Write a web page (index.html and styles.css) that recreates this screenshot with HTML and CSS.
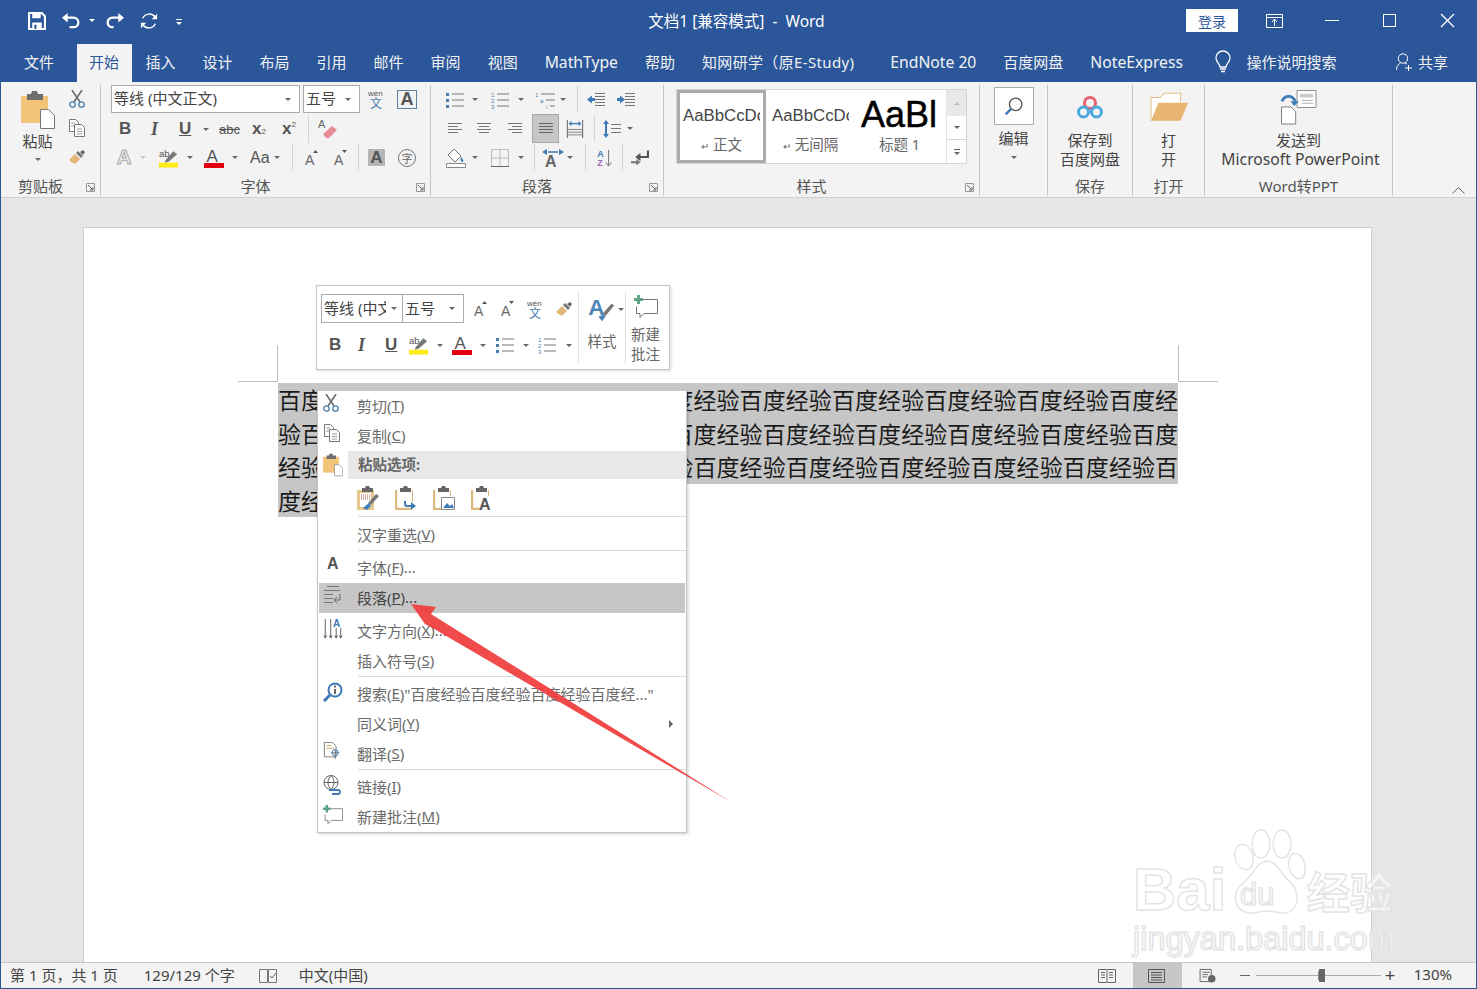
FILE: index.html
```html
<!DOCTYPE html>
<html lang="zh-CN">
  <head>
    <meta charset="UTF-8">
    <title>文档1 [兼容模式] - Word</title>
    <link rel="stylesheet" href="styles.css">
  </head>
  <body>
    <svg class="defs" aria-hidden="true">
      <symbol id="cut" viewBox="0 0 16 18"><path d="M3 0l8 12M13 0L5 12" stroke="#6b6b6b" stroke-width="1.6" fill="none"/><circle cx="3.5" cy="14.5" r="2.7" stroke="#4a7eb0" stroke-width="1.3" fill="none"/><circle cx="12.5" cy="14.5" r="2.7" stroke="#4a7eb0" stroke-width="1.3" fill="none"/></symbol>
      <symbol id="copy" viewBox="0 0 18 18"><path d="M1.500.500h6l3 3v9h-9z" fill="#fff" stroke="#777"/><path d="M6.500 5.500h7l3 3v9h-10z" fill="#fff" stroke="#777"/><path d="M3 4h4M3 7h3M9 10h5M9 12.500h5M9 15h5" stroke="#999"/></symbol>
      <symbol id="brush" viewBox="0 0 18 16"><path d="M1 11l6-6 5 5-5 5c-2-1-4-2-6-4z" fill="#e3b778"/><path d="M8 4l2-2 5 5-2 2z" fill="#777"/><path d="M12 3l3-2 2 2-2 3z" fill="#666"/></symbol>
      <symbol id="paste" viewBox="0 0 34 38"><path d="M0 5h27v27H0z" fill="#f1c47a"/><path d="M6 3h4l1-3h5l1 3h5v6H6z" fill="#6e6e6e"/><path d="M19.500 18.500h8l6 6v13h-14z" fill="#fff" stroke="#777"/></symbol>
      <symbol id="eraser" viewBox="0 0 20 20"><text x="0" y="9" font-family="Liberation Sans" font-size="11" fill="#666">A</text><path d="M5 15l9-8 5 4-8 8H8z" fill="#e98b95"/></symbol>
      <symbol id="highlight" viewBox="0 0 21 20"><text x="0" y="9" font-family="Liberation Sans" font-size="10" fill="#555">ab</text><path d="M7 12l8-9 4 3-9 8-4 1z" fill="#777"/><path d="M0 15h20v5H0z" fill="#ffec16"/></symbol>
      <symbol id="fontcolor" viewBox="0 0 20 20"><text x="2.500" y="14" font-family="Liberation Sans" font-size="17" fill="#555">A</text><path d="M0 15h20v5H0z" fill="#e3000f"/></symbol>
      <symbol id="growa" viewBox="0 0 14 16"><text x="0" y="15" font-family="Liberation Sans" font-size="14" fill="#666">A</text><path d="M8 3l2.500-3L13 3z" fill="#555"/></symbol>
      <symbol id="shrinka" viewBox="0 0 14 16"><text x="0" y="15" font-family="Liberation Sans" font-size="14" fill="#666">A</text><path d="M8 0h5l-2.500 3z" fill="#555"/></symbol>
      <symbol id="wen" viewBox="0 0 17 20"><text x="0" y="7" font-family="Liberation Sans" font-size="8" fill="#555">wén</text><text x="2" y="19" font-family="Noto Sans CJK SC" font-size="12" fill="#4a7eb0">文</text></symbol>
      <symbol id="bullets" viewBox="0 0 18 18"><path d="M6 3h12M6 9h12M6 15h12" stroke="#777"/><path d="M0 2h3v3H0zM0 8h3v3H0zM0 14h3v3H0z" fill="#4a7eb0"/></symbol>
      <symbol id="numbers" viewBox="0 0 18 18"><path d="M6 3h12M6 9h12M6 15h12" stroke="#777"/><text y="5.500" font-family="Liberation Sans" font-size="6" fill="#4a7eb0">1</text><text y="11.500" font-family="Liberation Sans" font-size="6" fill="#4a7eb0">2</text><text y="17.500" font-family="Liberation Sans" font-size="6" fill="#4a7eb0">3</text></symbol>
      <symbol id="multilevel" viewBox="0 0 22 18"><path d="M6 3h14M11 9h9M15 15h5" stroke="#777"/><text y="5.500" font-family="Liberation Sans" font-size="6" fill="#4a7eb0">1</text><text x="5" y="11.500" font-family="Liberation Sans" font-size="6" fill="#4a7eb0">a</text><text x="11" y="17.500" font-family="Liberation Sans" font-size="6" fill="#4a7eb0">i</text></symbol>
      <symbol id="outdent" viewBox="0 0 18 16"><path d="M8 1.500h10M8 4.500h10M8 7.500h10M8 10.500h10M8 13.500h10" stroke="#777"/><path d="M0 7.500l5-4v2.500h3v3H5v2.500z" fill="#3e7ab5"/></symbol>
      <symbol id="indent" viewBox="0 0 18 16"><path d="M8 1.500h10M8 4.500h10M8 7.500h10M8 10.500h10M8 13.500h10" stroke="#777"/><path d="M8 7.500l-5-4v2.500H0v3h3v2.500z" fill="#3e7ab5"/></symbol>
      <symbol id="alignleft" viewBox="0 0 14 12"><path d="M0 .5h14M0 3.500h10M0 6.500h14M0 9.500h10" stroke="#777"/></symbol>
      <symbol id="aligncenter" viewBox="0 0 14 12"><path d="M0 .5h14M2 3.500h10M0 6.500h14M2 9.500h10" stroke="#777"/></symbol>
      <symbol id="alignright" viewBox="0 0 14 12"><path d="M0 .5h14M4 3.500h10M0 6.500h14M4 9.500h10" stroke="#777"/></symbol>
      <symbol id="justify" viewBox="0 0 14 12"><path d="M0 .5h14M0 3.500h14M0 6.500h14M0 9.500h14" stroke="#666"/></symbol>
      <symbol id="distribute" viewBox="0 0 18 20"><path d="M.5 0v20M17.500 0v20" stroke="#555"/><path d="M3 4h12" stroke="#3e7ab5" stroke-width="1.500"/><path d="M2 4l3-3v6zM16 4l-3-3v6z" fill="#3e7ab5"/><path d="M1 10.500h16M1 13.500h16M1 16.500h16" stroke="#777"/></symbol>
      <symbol id="linespacing" viewBox="0 0 18 18"><path d="M3 0l3 4H4v10h2l-3 4-3-4h2V4H0z" fill="#3e7ab5"/><path d="M8 4.500h10M8 8.500h10M8 12.500h10" stroke="#777"/></symbol>
      <symbol id="shade" viewBox="0 0 20 20"><path d="M8 1l7 7-6 6-7-7z" fill="#fff" stroke="#777"/><path d="M15 9c2 2 3 4 2 5-2 0-3-2-2-5z" fill="#3e7ab5"/><path d="M.500 15.500h19v4H.500z" fill="#fff" stroke="#888"/></symbol>
      <symbol id="borders" viewBox="0 0 18 18"><path d="M.5.500h17v17H.500zM9 .5v17M.5 9h17" fill="none" stroke="#888" stroke-dasharray="1 1"/><path d="M0 17.500h18" stroke="#666"/></symbol>
      <symbol id="textdir" viewBox="0 0 22 18"><path d="M6 3h10" stroke="#3e7ab5" stroke-width="1.500"/><path d="M0 3l5-3v6zM22 3l-5-3v6z" fill="#3e7ab5"/><text x="3" y="18" font-family="Liberation Sans" font-weight="700" font-size="16" fill="#666">A</text></symbol>
      <symbol id="sort" viewBox="0 0 17 20"><text y="9" font-family="Liberation Sans" font-weight="700" font-size="10" fill="#3e7ab5">A</text><text y="19" font-family="Liberation Sans" font-weight="700" font-size="10" fill="#a06ab0">Z</text><path d="M12.500 1v17M9.500 15l3 4 3-4" stroke="#666" fill="none"/></symbol>
      <symbol id="marks" viewBox="0 0 17 14"><path d="M16 0v6H7" stroke="#555" stroke-width="2" fill="none"/><path d="M4 6l5-4v8z" fill="#555"/><path d="M0 11h6" stroke="#777" stroke-width="2"/><path d="M5 8l4 3-4 3z" fill="#777"/></symbol>
      <symbol id="launcher" viewBox="0 0 9 9"><path d="M.5 8.500v-8h8v8z" fill="none" stroke="#999"/><path d="M2 2l5 5M7 4v3H4" stroke="#666" fill="none"/></symbol>
      <symbol id="search" viewBox="0 0 24 24"><circle cx="14" cy="10" r="7.500" fill="none" stroke="#555" stroke-width="1.600"/><path d="M8.500 15.500L2 22" stroke="#3e7ab5" stroke-width="3"/></symbol>
      <symbol id="smart" viewBox="0 0 20 20"><circle cx="12" cy="8" r="6.500" fill="none" stroke="#3e7ab5" stroke-width="2"/><path d="M12 7v5M12 3.500v2" stroke="#555" stroke-width="1.800"/><path d="M7 13l-6 6" stroke="#3e7ab5" stroke-width="3"/></symbol>
      <symbol id="stylebrush" viewBox="0 0 32 30"><text x="0" y="22" font-family="Liberation Sans" font-weight="700" font-size="26" fill="#4f84b8">A</text><path d="M17 20l10-11 3 2-10 12z" fill="#777"/><path d="M12 24l6-3 2 3-4 5z" fill="#4f84b8"/></symbol>
      <symbol id="comment" viewBox="0 0 24 24"><path d="M7.500 4.500h16v14H10l-4 4v-4H2.500v-7" fill="none" stroke="#777"/><path d="M3 0h3v3h3v3H6v3H3V6H0V3h3z" fill="#5fa386"/></symbol>
      <symbol id="para" viewBox="0 0 18 18"><path d="M3 .5h12M0 4.500h16M0 8.500h9M0 12.500h9M0 16.500h9" stroke="#777"/><path d="M16 8v6h-5" stroke="#666" fill="none"/><path d="M13 11l-3 3 3 3" stroke="#666" fill="none"/></symbol>
      <symbol id="vertical" viewBox="0 0 20 22"><path d="M1.500 0v21M7.500 0v21M13.500 10v11M18.500 10v11" stroke="#555"/><path d="M0 18l1.500 3 1.500-3M6 18l1.500 3 1.500-3M12 18l1.500 3 1.500-3M17 18l1.500 3 1.500-3" fill="none" stroke="#555"/><text x="10" y="9" font-family="Liberation Sans" font-weight="700" font-size="11" fill="#3e7ab5">A</text></symbol>
      <symbol id="translate" viewBox="0 0 18 20"><path d="M.5.500h9l4 4v12H.5z" fill="#fff" stroke="#777"/><path d="M3 4h5M3 7h8" stroke="#c69a52"/><path d="M8 12h9M12.500 8v11" stroke="#666"/><circle cx="12.500" cy="12" r="3.500" fill="none" stroke="#3e7ab5"/></symbol>
      <symbol id="link" viewBox="0 0 20 20"><circle cx="8" cy="7.500" r="7" fill="none" stroke="#666"/><path d="M1 7.500h14M8 .5c-4 4-4 10 0 14M8 .5c4 4 4 10 0 14" fill="none" stroke="#666"/><path d="M6 15h9a2 2 0 0 1 0 4H9" fill="none" stroke="#3e7ab5" stroke-width="1.800"/></symbol>
      <symbol id="clip-keep" viewBox="0 0 22 24"><path d="M0 4h17v20H0z" fill="#e8c68f"/><path d="M3 7h11v14H3z" fill="#fff"/><path d="M4 9h9M4 11h9M4 13h9" stroke="#c0604f" stroke-dasharray="1 1"/><path d="M5 2h3l1-2h3l1 2h3v4H5z" fill="#666"/><path d="M11 17l8-9 3 2-8 9z" fill="#777"/><path d="M6 22l6-5 2 3-4 4z" fill="#3e7ab5"/></symbol>
      <symbol id="clip-merge" viewBox="0 0 22 24"><path d="M1 4v19h16" fill="none" stroke="#dcb97f" stroke-width="2.400"/><path d="M17.500 4v12" stroke="#dcb97f"/><path d="M5 2h3l1-2h3l1 2h3v4H5z" fill="#666"/><path d="M10 15v3a2 2 0 0 0 2 2h5" fill="none" stroke="#3e7ab5" stroke-width="2"/><path d="M16 16l5 4-5 4z" fill="#3e7ab5"/></symbol>
      <symbol id="clip-pic" viewBox="0 0 22 24"><path d="M1 4v19h8" fill="none" stroke="#dcb97f" stroke-width="2.400"/><path d="M17.500 4v6" stroke="#dcb97f"/><path d="M5 2h3l1-2h3l1 2h3v4H5z" fill="#666"/><path d="M8.500 11.500h13v12h-13z" fill="#fff" stroke="#888"/><path d="M10 22l4-5 3 3 2-2 2 4z" fill="#3e7ab5"/></symbol>
      <symbol id="clip-text" viewBox="0 0 22 24"><path d="M1 4v19h8" fill="none" stroke="#dcb97f" stroke-width="2.400"/><path d="M17.500 4v6" stroke="#dcb97f"/><path d="M5 2h3l1-2h3l1 2h3v4H5z" fill="#666"/><text x="8" y="24" font-family="Liberation Sans" font-weight="700" font-size="16" fill="#555">A</text></symbol>
    </svg>

    <div class="app">
      <header class="titlebar">
        <div class="qat">
          <svg class="qat-icon" viewBox="0 0 17 17"><path d="M1 1h12l3 3v12H1z" fill="none" stroke="#fff" stroke-width="2"/><path d="M4 1h8v5H4zM4 10h9v6H4z" fill="#fff"/><path d="M6 12h2v4H6z" fill="#2b579a"/></svg>
          <svg class="qat-icon" viewBox="0 0 19 17"><path d="M2 5h10c7 0 7 10 0 10H8" fill="none" stroke="#fff" stroke-width="2.400"/><path d="M0 5l6-5v10z" fill="#fff"/></svg>
          <i class="caret caret-white"></i>
          <svg class="qat-icon" viewBox="0 0 19 17"><path d="M17 5H7c-7 0-7 10 0 10h1" fill="none" stroke="#fff" stroke-width="2.400"/><path d="M19 5l-6-5v10z" fill="#fff"/></svg>
          <svg class="qat-icon" viewBox="0 0 20 20"><path d="M3 7a8 8 0 0 1 14-1M17 13a8 8 0 0 1-14 1" fill="none" stroke="#fff" stroke-width="1.600"/><path d="M19 2v6h-6zM1 18v-6h6z" fill="#fff"/></svg>
          <span class="qat-more"><i class="more-line"></i><i class="caret caret-white"></i></span>
        </div>
        <div class="doc-title">文档1 [兼容模式]&nbsp; -&nbsp; Word</div>
        <div class="win-controls">
          <button class="login">登录</button>
          <span class="win-btn"><svg class="win-icon-wide" viewBox="0 0 17 14"><path d="M.5.500h16v13H.5zM.5 3.500h16" fill="none" stroke="#fff"/><path d="M8.500 5v7M6 8l2.500-3L11 8" fill="none" stroke="#fff"/></svg></span>
          <span class="win-btn"><i class="win-min"></i></span>
          <span class="win-btn"><i class="win-max"></i></span>
          <span class="win-btn"><svg class="win-icon" viewBox="0 0 13 13"><path d="M0 0l13 13M13 0L0 13" stroke="#fff" stroke-width="1.300"/></svg></span>
        </div>
      </header>

      <nav class="tabs">
        <span class="tab">文件</span>
        <span class="tab tab-active">开始</span>
        <span class="tab">插入</span>
        <span class="tab">设计</span>
        <span class="tab">布局</span>
        <span class="tab">引用</span>
        <span class="tab">邮件</span>
        <span class="tab">审阅</span>
        <span class="tab">视图</span>
        <span class="tab tab-latin">MathType</span>
        <span class="tab">帮助</span>
        <span class="tab tab-cnki">知网研学（原E-Study)</span>
        <span class="tab tab-latin tab-endnote">EndNote 20</span>
        <span class="tab">百度网盘</span>
        <span class="tab tab-latin">NoteExpress</span>
        <svg class="bulb" viewBox="0 0 16 22"><path d="M5 16c0-3-4-5-4-9a7 7 0 0 1 14 0c0 4-4 6-4 9z" fill="none" stroke="#fff" stroke-width="1.300"/><path d="M5 18h6M6 20.500h4" stroke="#fff" stroke-width="1.300"/></svg>
        <span class="tell-me">操作说明搜索</span>
        <svg class="share-icon" viewBox="0 0 16 18"><circle cx="7" cy="5.500" r="4.700" fill="none" stroke="#fff"/><path d="M.5 17c0-4 2-6 4-7M9 10l2 1M9 15h7M12.500 12v6" fill="none" stroke="#fff"/></svg>
        <span class="share">共享</span>
      </nav>

      <section class="ribbon">
        <div class="group g-clip">
          <div class="group-body clip-body">
            <div class="paste-col">
              <svg class="paste-big"><use href="#paste"/></svg>
              <span class="big-label">粘贴</span>
              <i class="caret"></i>
            </div>
            <div class="clip-tools">
              <svg class="ic16"><use href="#cut"/></svg>
              <svg class="ic18"><use href="#copy"/></svg>
              <svg class="ic18"><use href="#brush"/></svg>
            </div>
          </div>
          <div class="group-label has-launcher">剪贴板<svg class="launcher"><use href="#launcher"/></svg></div>
        </div>

        <div class="group g-font">
          <div class="group-body">
            <div class="font-row1">
              <div class="combo combo-font"><span>等线 (中文正文)</span><i class="caret"></i></div>
              <div class="combo combo-size"><span>五号</span><i class="caret"></i></div>
              <svg class="ic-wen"><use href="#wen"/></svg>
              <span class="boxed-a">A</span>
            </div>
            <div class="font-row2 tool-row">
              <b class="t-b">B</b><i class="t-i">I</i><u class="t-u">U</u><i class="caret"></i>
              <s class="t-abc">abc</s>
              <span class="t-sub">x<small>2</small></span>
              <span class="t-sup">x<sup>2</sup></span>
              <i class="vsep"></i>
              <svg class="ic20"><use href="#eraser"/></svg>
            </div>
            <div class="font-row3 tool-row">
              <span class="a-outline">A</span><i class="caret caret-light"></i>
              <svg class="ic20"><use href="#highlight"/></svg><i class="caret"></i>
              <svg class="ic20"><use href="#fontcolor"/></svg><i class="caret"></i>
              <span class="t-aa">Aa</span><i class="caret"></i>
              <i class="vsep"></i>
              <svg class="ic14"><use href="#growa"/></svg>
              <svg class="ic14"><use href="#shrinka"/></svg>
              <i class="vsep"></i>
              <span class="a-shade">A</span>
              <span class="t-zi">字</span>
            </div>
          </div>
          <div class="group-label has-launcher">字体<svg class="launcher"><use href="#launcher"/></svg></div>
        </div>

        <div class="group g-para">
          <div class="group-body">
            <div class="para-row1 tool-row">
              <svg class="ic18"><use href="#bullets"/></svg><i class="caret"></i>
              <svg class="ic18"><use href="#numbers"/></svg><i class="caret"></i>
              <svg class="ic22"><use href="#multilevel"/></svg><i class="caret"></i>
              <i class="vsep"></i>
              <svg class="ic18"><use href="#outdent"/></svg>
              <svg class="ic18"><use href="#indent"/></svg>
            </div>
            <div class="para-row2 tool-row">
              <svg class="ic14"><use href="#alignleft"/></svg>
              <svg class="ic14"><use href="#aligncenter"/></svg>
              <svg class="ic14"><use href="#alignright"/></svg>
              <span class="justify-on"><svg class="ic14"><use href="#justify"/></svg></span>
              <svg class="ic18"><use href="#distribute"/></svg>
              <i class="vsep"></i>
              <svg class="ic18"><use href="#linespacing"/></svg><i class="caret"></i>
            </div>
            <div class="para-row3 tool-row">
              <svg class="ic20"><use href="#shade"/></svg><i class="caret"></i>
              <svg class="ic18"><use href="#borders"/></svg><i class="caret"></i>
              <i class="vsep"></i>
              <svg class="ic22"><use href="#textdir"/></svg><i class="caret"></i>
              <i class="vsep"></i>
              <svg class="ic18"><use href="#sort"/></svg>
              <i class="vsep"></i>
              <svg class="ic18"><use href="#marks"/></svg>
            </div>
          </div>
          <div class="group-label has-launcher">段落<svg class="launcher"><use href="#launcher"/></svg></div>
        </div>

        <div class="group g-style">
          <div class="group-body">
            <div class="gallery">
              <div class="style-item style-on"><span class="style-sample">AaBbCcDc</span><span class="style-name"><small>↵</small> 正文</span></div>
              <div class="style-item"><span class="style-sample">AaBbCcDc</span><span class="style-name"><small>↵</small> 无间隔</span></div>
              <div class="style-item"><span class="style-sample style-big">AaBl</span><span class="style-name">标题 1</span></div>
              <div class="gallery-scroll">
                <span class="scroll-up"><i class="caret-up"></i></span>
                <span class="scroll-down"><i class="caret"></i></span>
                <span class="scroll-more"><i class="more-line more-dark"></i><i class="caret"></i></span>
              </div>
            </div>
          </div>
          <div class="group-label has-launcher">样式<svg class="launcher"><use href="#launcher"/></svg></div>
        </div>

        <div class="group g-edit">
          <div class="group-body big-col">
            <span class="edit-box"><svg class="ic22"><use href="#search"/></svg></span>
            <span class="big-label edit-label">编辑</span>
            <i class="caret"></i>
          </div>
        </div>

        <div class="group g-save">
          <div class="group-body big-col">
            <svg class="big-icon icon-save" viewBox="0 0 28 26"><circle cx="14" cy="8" r="5.500" fill="none" stroke="#e8606a" stroke-width="3"/><circle cx="7.500" cy="17" r="5" fill="none" stroke="#4aa8de" stroke-width="3"/><circle cx="20.500" cy="17" r="5" fill="none" stroke="#4aa8de" stroke-width="3"/></svg>
            <span class="big-text">保存到<br>百度网盘</span>
          </div>
          <div class="group-label">保存</div>
        </div>

        <div class="group g-open">
          <div class="group-body big-col">
            <svg class="big-icon" viewBox="0 0 36 28"><path d="M1 27V5h9l3-4h16v8" fill="#fff" stroke="#e3bf87"/><path d="M1 27l7-17h28l-7 17z" fill="#e8b671"/></svg>
            <span class="big-text">打<br>开</span>
          </div>
          <div class="group-label">打开</div>
        </div>

        <div class="group g-ppt">
          <div class="group-body big-col">
            <svg class="big-icon" viewBox="0 0 38 36"><path d="M17 .5h20v18H17z" fill="#fff" stroke="#888"/><path d="M20 4h14v4H20z" fill="#ccc"/><path d="M22 11h12M22 14h12" stroke="#aaa"/><path d="M.5 18h10l5 5v13H.5z" fill="#fff" stroke="#777"/><path d="M1 12c3-7 11-7 14 0" fill="none" stroke="#3e7ab5" stroke-width="3"/><path d="M10 12h9l-5 5z" fill="#3e7ab5"/></svg>
            <span class="big-text">发送到<br><span class="latin-wide">Microsoft PowerPoint</span></span>
          </div>
          <div class="group-label">Word转PPT</div>
        </div>

        <svg class="collapse" viewBox="0 0 13 7"><path d="M.5 6.500l6-6 6 6" fill="none" stroke="#666"/></svg>
      </section>

      <main class="doc-area">
        <div class="page">
          <i class="crop crop-left"></i>
          <i class="crop crop-right"></i>
          <div class="page-text">
            <div class="sel-line">百度经验百度经验百度经验百度经验百度经验百度经验百度经验百度经验百度经验百度经</div>
            <div class="sel-line">验百度经验百度经验百度经验百度经验百度经验百度经验百度经验百度经验百度经验百度</div>
            <div class="sel-line">经验百度经验百度经验百度经验百度经验百度经验百度经验百度经验百度经验百度经验百</div>
            <div class="sel-line sel-last">度经验百度经验百度</div>
          </div>
        </div>
      </main>

      <footer class="statusbar">
        <span class="st-page">第 1 页，共 1 页</span>
        <span class="st-count">129/129 个字</span>
        <svg class="st-proof" viewBox="0 0 18 16"><path d="M8.500 1.500H.5v13h8zM9.500 1.500h8v13h-8z" fill="none" stroke="#777"/><path d="M11 8l2 2 4-5" fill="none" stroke="#666"/></svg>
        <span class="st-lang">中文(中国)</span>
        <div class="st-right">
          <svg class="st-view" viewBox="0 0 18 14"><path d="M.5.500h8l.5 1 .5-1h8v13h-8l-.5-1-.5 1h-8zM9 2v10M3 3.500h4M3 6h4M3 8.500h4M11 3.500h4M11 6h4M11 8.500h4" fill="none" stroke="#666"/></svg>
          <span class="st-view-on"><svg class="st-view" viewBox="0 0 18 14"><path d="M.5.500h16v13H.5zM3 3.500h11M3 6h11M3 8.500h11M3 11h11" fill="none" stroke="#555"/></svg></span>
          <svg class="st-view st-web" viewBox="0 0 18 15"><path d="M.5.500h12v13H.5zM3 3.500h8M3 6h6M3 8.500h5" fill="none" stroke="#666"/><circle cx="13" cy="10.500" r="4" fill="#666"/></svg>
          <i class="zoom-minus"></i>
          <div class="slider"><i class="slider-mark"></i><i class="slider-thumb"></i></div>
          <span class="zoom-plus">+</span>
          <span class="zoom-pct">130%</span>
        </div>
      </footer>

      <div class="mini">
        <div class="mini-main">
          <div class="mini-row1 tool-row">
            <div class="combo mini-font"><span>等线 (中文</span><i class="caret"></i></div>
            <div class="combo mini-size"><span>五号</span><i class="caret"></i></div>
            <svg class="ic14"><use href="#growa"/></svg>
            <svg class="ic14"><use href="#shrinka"/></svg>
            <svg class="ic-wen"><use href="#wen"/></svg>
            <svg class="ic18"><use href="#brush"/></svg>
          </div>
          <div class="mini-row2 tool-row">
            <b class="t-b">B</b><i class="t-i">I</i><u class="t-u">U</u>
            <svg class="ic20"><use href="#highlight"/></svg><i class="caret"></i>
            <svg class="ic20"><use href="#fontcolor"/></svg><i class="caret"></i>
            <svg class="ic18"><use href="#bullets"/></svg><i class="caret"></i>
            <svg class="ic18"><use href="#numbers"/></svg><i class="caret"></i>
          </div>
        </div>
        <div class="mini-col mini-style">
          <div class="mini-style-icon"><svg class="ic26"><use href="#stylebrush"/></svg><i class="caret"></i></div>
          <span>样式</span>
        </div>
        <div class="mini-col mini-comment">
          <svg class="ic24"><use href="#comment"/></svg>
          <span>新建<br>批注</span>
        </div>
      </div>

      <div class="menu">
        <div class="menu-item"><svg class="menu-ic m16"><use href="#cut"/></svg>剪切(<u>T</u>)</div>
        <div class="menu-item"><svg class="menu-ic m18"><use href="#copy"/></svg>复制(<u>C</u>)</div>
        <div class="menu-head"><svg class="head-ic"><use href="#paste"/></svg><span>粘贴选项:</span></div>
        <div class="paste-row">
          <svg class="clip-ic"><use href="#clip-keep"/></svg>
          <svg class="clip-ic"><use href="#clip-merge"/></svg>
          <svg class="clip-ic"><use href="#clip-pic"/></svg>
          <svg class="clip-ic"><use href="#clip-text"/></svg>
        </div>
        <div class="menu-sep sep-4"></div>
        <div class="menu-item">汉字重选(<u>V</u>)</div>
        <div class="menu-sep"></div>
        <div class="menu-item"><b class="menu-a">A</b>字体(<u>F</u>)...</div>
        <div class="menu-item menu-hover"><svg class="menu-ic m18"><use href="#para"/></svg>段落(<u>P</u>)...</div>
        <div class="menu-item menu-gap"><svg class="menu-ic m20"><use href="#vertical"/></svg>文字方向(<u>X</u>)...</div>
        <div class="menu-item">插入符号(<u>S</u>)</div>
        <div class="menu-sep"></div>
        <div class="menu-item"><svg class="menu-ic m20"><use href="#smart"/></svg>搜索(<u>E</u>)"百度经验百度经验百度经验百度经..."</div>
        <div class="menu-item">同义词(<u>Y</u>)<i class="menu-arrow"></i></div>
        <div class="menu-item"><svg class="menu-ic m18"><use href="#translate"/></svg>翻译(<u>S</u>)</div>
        <div class="menu-sep"></div>
        <div class="menu-item"><svg class="menu-ic m20"><use href="#link"/></svg>链接(<u>I</u>)</div>
        <div class="menu-item"><svg class="menu-ic m20"><use href="#comment"/></svg>新建批注(<u>M</u>)</div>
      </div>

      <svg class="arrow" viewBox="400 595 340 215"><path d="M411 604l25 3-5 7 300 188-295-172-11-6z" fill="#f03f3f" fill-opacity="0.94"/></svg>

      <div class="watermark">
        <svg class="wm-paw" viewBox="0 0 76 90"><g fill="none" stroke="#e4e4e4" stroke-width="1.500"><ellipse cx="15" cy="28" rx="9" ry="13" transform="rotate(-15 15 28)"/><ellipse cx="32" cy="15" rx="9" ry="14"/><ellipse cx="53" cy="15" rx="9" ry="14"/><ellipse cx="68" cy="37" rx="8" ry="13" transform="rotate(-15 68 37)"/><path d="M38 32c10 0 14 14 24 22 9 8 9 30-8 30-6 0-10-2-16-2s-10 2-16 2C4 84 2 62 14 54c10-7 14-22 24-22z"/></g></svg>
        <span class="wm-bai">Bai</span>
        <span class="wm-du">du</span>
        <span class="wm-jy">经验</span>
        <span class="wm-url">jingyan.baidu.com</span>
      </div>
    </div>
  </body>
</html>
```

FILE: styles.css
```css
* {
  box-sizing: border-box;
}

html, body {
  margin: 0;
  padding: 0;
}

body {
  width: 1477px;
  height: 989px;
  overflow: hidden;
  font-family: "Noto Sans", "Noto Sans CJK SC", sans-serif;
  font-size: 14px;
  color: #444;
}

.defs {
  display: none;
}

svg {
  display: block;
  overflow: visible;
}

.app {
  position: relative;
  display: flex;
  flex-direction: column;
  width: 1477px;
  height: 989px;
  border-left: 1px solid #2b579a;
  border-right: 1px solid #2b579a;
  border-bottom: 1px solid #2b579a;
  background-color: #e6e6e6;
}

/* title bar */
.titlebar {
  display: grid;
  grid-template-columns: 1fr auto 1fr;
  align-items: center;
  height: 41px;
  background-color: #2b579a;
  color: white;
}

.qat {
  display: grid;
  grid-template-columns: 34px 27px 17px 34px 36px auto;
  align-items: center;
  padding-left: 27px;
}

.qat-icon {
  width: 18px;
  height: 18px;
}

.qat-more {
  display: flex;
  flex-direction: column;
  align-items: flex-start;
  gap: 2px;
  margin-top: 2px;
}

.more-line {
  width: 6px;
  height: 1px;
  background-color: white;
}

.more-dark {
  background-color: #666;
}

.doc-title {
  padding-right: 4px;
  font-size: 15.500px;
  white-space: nowrap;
}

.win-controls {
  display: flex;
  justify-content: flex-end;
  align-items: center;
}

.login {
  width: 52px;
  height: 23px;
  margin-right: 8px;
  padding: 0;
  border: none;
  background-color: white;
  color: #2b579a;
  font-family: inherit;
  font-size: 14px;
}

.win-btn {
  display: flex;
  justify-content: center;
  align-items: center;
  width: 57.500px;
  height: 41px;
}

.win-icon-wide {
  width: 17px;
  height: 14px;
}

.win-icon {
  width: 13px;
  height: 13px;
}

.win-min {
  width: 14px;
  height: 1px;
  background-color: white;
}

.win-max {
  width: 13px;
  height: 13px;
  border: 1px solid white;
}

/* tabs */
.tabs {
  display: flex;
  align-items: center;
  height: 41px;
  padding-left: 9.500px;
  background-color: #2b579a;
  color: #f2f2f2;
  font-size: 15px;
  white-space: nowrap;
}

.tab {
  display: flex;
  align-items: center;
  height: 38px;
  margin-top: 3px;
  padding: 0 13.500px 3px;
}

.tab-active {
  margin-left: 9px;
  padding: 0 12.500px 3px;
  background-color: #f3f3f3;
  color: #2b579a;
}

.tab-active + .tab {
  padding-left: 14px;
}

.tab-latin {
  font-size: 15.700px;
}

.tab-cnki {
  letter-spacing: 0.350px;
}

.tab-endnote {
  margin-left: 9px;
}

.bulb {
  width: 16px;
  height: 22px;
  margin-left: 18px;
}

.tell-me {
  margin-left: 16px;
}

.share-icon {
  width: 16px;
  height: 18px;
  margin-left: auto;
}

.share {
  margin-left: 6px;
  margin-right: 28px;
}

/* ribbon */
.ribbon {
  position: relative;
  display: flex;
  height: 116px;
  background-color: #f3f3f3;
  border-bottom: 1px solid #d0d0d0;
  color: #444;
}

.group {
  position: relative;
  display: flex;
  flex-direction: column;
  height: 111px;
  margin-top: 3px;
  border-right: 1px solid #c6c6c6;
}

.group-body {
  height: 91px;
}

.group-label {
  position: relative;
  height: 20px;
  font-size: 15px;
  line-height: 20px;
  text-align: center;
  color: #555;
}

.has-launcher {
  padding-right: 20px;
}

.launcher {
  position: absolute;
  right: 5px;
  top: 7px;
  width: 9px;
  height: 9px;
}

.g-clip { width: 100px; }
.g-font { width: 330px; }
.g-para { width: 233px; }
.g-style { width: 316px; }
.g-edit { width: 68px; }
.g-save { width: 85px; }
.g-open { width: 72px; }
.g-ppt { width: 188px; }

.clip-body {
  display: flex;
}

.paste-col {
  display: flex;
  flex-direction: column;
  align-items: center;
  width: 61px;
  padding: 6px 0 0 12px;
}

.paste-big {
  width: 34px;
  height: 38px;
  margin-bottom: 2px;
}

.paste-col .caret {
  margin-top: 7px;
}

.big-label {
  font-size: 15px;
  line-height: 20px;
}

.clip-tools {
  display: flex;
  flex-direction: column;
  align-items: center;
  gap: 11px;
  padding: 5px 0 0 6px;
}

.caret {
  display: block;
  width: 0;
  height: 0;
  border-top: 3px solid #666;
  border-left: 3px solid transparent;
  border-right: 3px solid transparent;
}

.caret-white {
  border-top-color: white;
}

.caret-light {
  border-top-color: #ccc;
}

.caret-up {
  display: block;
  width: 0;
  height: 0;
  border-bottom: 3px solid #bbb;
  border-left: 3px solid transparent;
  border-right: 3px solid transparent;
}

.ic14 { width: 14px; height: 16px; }
.ic16 { width: 16px; height: 18px; }
.ic18 { width: 18px; height: 18px; }
.ic20 { width: 20px; height: 20px; }
.ic22 { width: 22px; height: 20px; }
.ic24 { width: 24px; height: 24px; }
.ic26 { width: 28px; height: 26px; }
.ic-wen { width: 17px; height: 20px; }

.tool-row {
  display: grid;
  align-items: center;
  justify-items: start;
  height: 29px;
}

.vsep {
  display: block;
  width: 1px;
  height: 27px;
  background-color: #d4d4d4;
}

/* font group */
.font-row1 {
  display: flex;
  align-items: center;
  height: 28px;
  padding-left: 10px;
}

.combo {
  display: flex;
  align-items: center;
  justify-content: space-between;
  height: 28px;
  padding: 0 8px 3px 2px;
  background-color: white;
  border: 1px solid #ababab;
  font-size: 15px;
  white-space: nowrap;
  overflow: hidden;
}

.combo .caret {
  margin-top: 3px;
}

.combo-font {
  width: 189px;
}

.combo-size {
  width: 57px;
  margin-left: 3px;
}

.font-row1 .ic-wen {
  margin-left: 8px;
}

.boxed-a {
  display: flex;
  align-items: center;
  justify-content: center;
  width: 20px;
  height: 19px;
  margin-left: 12px;
  border: 1px solid #5d7fa3;
  font-family: "Liberation Sans", sans-serif;
  font-size: 18px;
  font-weight: 700;
  color: #555;
}

.font-row2 {
  grid-template-columns: 32px 28px 24px 16px 33px 30px 26px 10px auto;
  height: 28px;
  margin-top: 2px;
  padding-left: 18px;
}

.font-row3 {
  grid-template-columns: 23px 19px 28px 17px 28px 18px 24px 18px 13px 29px 24px 10px 30px auto;
  padding-left: 16px;
}

.t-b, .t-i, .t-u, .t-abc, .t-sub, .t-sup, .t-aa, .a-outline, .a-shade {
  font-family: "Liberation Sans", sans-serif;
  color: #555;
}

.t-b {
  font-size: 17px;
  font-weight: 700;
}

.t-i {
  font-family: "Liberation Serif", serif;
  font-size: 18px;
  font-weight: 700;
  font-style: italic;
}

.t-u {
  font-size: 17px;
  font-weight: 700;
}

.t-abc {
  font-size: 13px;
}

.t-sub, .t-sup {
  font-size: 17px;
  font-weight: 700;
  line-height: 16px;
}

.t-sub small, .t-sup sup {
  font-size: 8px;
  font-weight: 400;
  line-height: 0;
}

.t-aa {
  font-size: 16px;
}

.a-outline {
  font-size: 20px;
  font-weight: 700;
  color: #f3f3f3;
  -webkit-text-stroke: 1px #aaa;
}

.a-shade {
  display: flex;
  justify-content: center;
  width: 17px;
  height: 17px;
  background-color: #b4b4b4;
  font-size: 17px;
  font-weight: 700;
  line-height: 17px;
}

.t-zi {
  display: flex;
  justify-content: center;
  align-items: center;
  width: 18px;
  height: 18px;
  border: 1px solid #777;
  border-radius: 50%;
  font-size: 11px;
  color: #666;
}

/* paragraph group */
.para-row1 {
  grid-template-columns: 26px 19px 27px 17px 25px 17px 10px 30px auto;
  padding-left: 15px;
}

.para-row2 {
  grid-template-columns: 29px 31px 24px 34px 28px 9px 24px auto;
  padding-left: 17px;
}

.para-row3 {
  grid-template-columns: 26px 19px 27px 16px 8px 25px 18px 11px 26px 9px auto;
  padding-left: 15px;
}

.para-row2 .ic14 {
  height: 12px;
}

.justify-on {
  display: flex;
  align-items: center;
  justify-content: center;
  width: 27px;
  height: 29px;
  background-color: #c6c6c6;
  border: 1px solid #a8a8a8;
}

/* styles group */
.gallery {
  display: flex;
  width: 291px;
  height: 75px;
  margin: 4px 0 0 12px;
  background-color: white;
  border: 1px solid #d4d4d4;
}

.style-item {
  display: flex;
  flex-direction: column;
  align-items: center;
  width: 89px;
  padding-top: 3px;
  overflow: hidden;
}

.style-on {
  height: 73px;
  border: 3px solid #ababab;
  padding-top: 0;
}

.style-sample {
  height: 41px;
  width: 77px;
  overflow: hidden;
  font-family: "Liberation Sans", sans-serif;
  font-size: 16.800px;
  line-height: 46px;
  color: #444;
  white-space: nowrap;
}

.style-big {
  font-size: 36px;
  line-height: 44px;
  color: black;
  -webkit-text-stroke: 0.5px black;
}

.style-name {
  font-size: 14.500px;
  line-height: 20px;
  color: #666;
}

.style-name small {
  font-size: 10px;
}

.gallery-scroll {
  display: flex;
  flex-direction: column;
  width: 20px;
  margin-left: auto;
  border-left: 1px solid #e4e4e4;
}

.gallery-scroll span {
  display: flex;
  flex-direction: column;
  align-items: center;
  justify-content: center;
  gap: 2px;
}

.scroll-up {
  height: 26px;
  background-color: #e8e8e8;
}

.scroll-down {
  height: 24px;
  border-bottom: 1px solid #d4d4d4;
}

.scroll-more {
  height: 23px;
}

/* big buttons */
.big-col {
  display: flex;
  flex-direction: column;
  align-items: center;
}

.big-icon {
  height: 34px;
  width: 38px;
  margin-top: 5px;
  margin-bottom: 7px;
}

.icon-save {
  width: 28px;
  height: 26px;
  margin-top: 10px;
  margin-bottom: 10px;
}

.big-text {
  font-size: 15px;
  line-height: 19px;
  text-align: center;
  white-space: nowrap;
}

.latin-wide {
  margin-left: 4px;
  font-size: 15.700px;
}

.edit-box {
  display: flex;
  align-items: center;
  justify-content: center;
  width: 40px;
  height: 38px;
  margin-top: 2px;
  background-color: white;
  border: 1px solid #ababab;
}

.edit-label {
  margin-top: 3px;
}

.edit-box + .edit-label + .caret {
  margin-top: 8px;
}

.g-edit .group-body {
  height: auto;
}

.collapse {
  position: absolute;
  right: 11px;
  top: 105px;
  width: 13px;
  height: 7px;
}

/* document */
.doc-area {
  flex: 1;
  overflow: hidden;
  min-height: 0;
}

.page {
  position: relative;
  width: 1289px;
  height: 800px;
  margin: 29px 0 0 82px;
  padding: 155px 0 0 194px;
  background-color: white;
  border: 1px solid #cfcfcf;
}

.crop {
  position: absolute;
  top: 117px;
  width: 40px;
  height: 37px;
  border-bottom: 1px solid #bdbdbd;
}

.crop-left {
  left: 154px;
  width: 40px;
  border-right: 1px solid #bdbdbd;
}

.crop-right {
  left: 1094px;
  border-left: 1px solid #bdbdbd;
}

.page-text {
  width: 900px;
  font-family: "Noto Sans CJK SC", sans-serif;
  font-size: 23px;
  line-height: 32px;
  color: #1a1a1a;
}

.sel-line {
  height: 33.600px;
  background-color: #c6c6c6;
  letter-spacing: 0.08px;
  white-space: nowrap;
  overflow: hidden;
}

.sel-last {
  width: 277px;
}

/* status bar */
.statusbar {
  display: flex;
  align-items: center;
  height: 26px;
  padding-left: 9px;
  background-color: #f3f3f3;
  border-top: 1px solid #c6c6c6;
  color: #444;
  font-size: 15px;
  white-space: nowrap;
}

.st-page, .st-count, .st-lang, .zoom-pct {
  margin-top: -3px;
}

.st-count {
  margin-left: 26px;
}

.st-proof {
  width: 18px;
  height: 16px;
  margin-left: 24px;
}

.st-lang {
  margin-left: 22px;
}

.st-right {
  display: flex;
  align-items: center;
  height: 100%;
  margin-left: auto;
}

.st-view {
  width: 18px;
  height: 14px;
}

.st-view-on {
  display: flex;
  align-items: center;
  justify-content: center;
  width: 49px;
  height: 100%;
  margin: 0 17px;
  background-color: #c6c6c6;
}

.zoom-minus {
  width: 10px;
  height: 1px;
  margin-left: 23px;
  background-color: #666;
}

.slider {
  position: relative;
  width: 125px;
  height: 1px;
  margin-left: 6px;
  background-color: #aaa;
}

.slider-mark {
  position: absolute;
  left: 62px;
  top: -4px;
  width: 1px;
  height: 9px;
  background-color: #888;
}

.slider-thumb {
  position: absolute;
  left: 63px;
  top: -6px;
  width: 6px;
  height: 13px;
  background-color: #666;
}

.zoom-plus {
  width: 12px;
  margin-left: 4px;
  font-size: 18px;
  font-family: "Liberation Sans", sans-serif;
  line-height: 18px;
}

.zoom-pct {
  margin-left: 17px;
  margin-right: 24px;
}

/* floating mini toolbar */
.mini {
  position: absolute;
  left: 315px;
  top: 285px;
  display: flex;
  width: 354px;
  height: 85px;
  background-color: white;
  border: 1px solid #c6c6c6;
  box-shadow: 1px 1px 3px rgba(0, 0, 0, 0.15);
}

.mini-main {
  width: 261px;
  padding-top: 8px;
}

.mini-row1 {
  grid-template-columns: 82px 71px 27px 26px 28px auto;
  padding-left: 4px;
}

.mini-row2 {
  grid-template-columns: 29px 27px 24px 28px 15px 28px 16px 27px 15px 28px auto;
  height: 44px;
  padding-left: 12px;
}

.mini-font {
  width: 82px;
  height: 29px;
  padding: 0 5px 3px 2px;
  overflow: hidden;
}

.mini-font span {
  width: 62px;
  overflow: hidden;
}

.mini-size {
  width: 62px;
  height: 29px;
  margin-left: -1px;
}

.mini-col {
  display: flex;
  flex-direction: column;
  align-items: center;
  border-left: 1px solid #e0e0e0;
  margin: 6px 0;
  font-size: 14.500px;
  line-height: 20px;
  color: #666;
  text-align: center;
}

.mini-style {
  width: 47px;
}

.mini-style-icon {
  display: flex;
  align-items: center;
  gap: 2px;
  height: 30px;
  margin-top: 2px;
  margin-left: 7px;
  margin-bottom: 7px;
}

.mini-comment {
  width: 44px;
  padding-right: 4px;
}

.mini-comment .ic24 {
  margin-top: 3px;
  margin-bottom: 5px;
}

/* context menu */
.menu {
  position: absolute;
  left: 316px;
  top: 390px;
  width: 370px;
  height: 443px;
  background-color: white;
  border: 1px solid #c6c6c6;
  box-shadow: 0 -7px 0 #c6c6c6, 1px 1px 3px rgba(0, 0, 0, 0.2);
  color: #6a6a6a;
  font-size: 15px;
}

.menu-item {
  position: relative;
  display: flex;
  align-items: center;
  height: 30px;
  padding-left: 39px;
  padding-bottom: 2px;
  white-space: nowrap;
}

.menu-gap {
  margin-top: 3px;
}

.menu-hover {
  margin: 0 1px;
  padding-left: 38px;
  background-color: #c6c6c6;
  color: #444;
}

.menu-ic {
  position: absolute;
  left: 5px;
  top: 3px;
}

.m16 { width: 16px; height: 18px; }
.m18 { width: 18px; height: 18px; }
.m20 { width: 20px; height: 20px; }

.menu-a {
  position: absolute;
  left: 9px;
  top: 2px;
  font-family: "Liberation Sans", sans-serif;
  font-size: 16px;
  color: #555;
}

.menu-head {
  position: relative;
  height: 28px;
  margin-left: 30px;
  padding-left: 10px;
  background-color: #e8e8e8;
  color: #666;
  font-size: 14.500px;
  font-weight: 700;
  line-height: 26px;
}

.head-ic {
  position: absolute;
  left: -25px;
  top: 2px;
  width: 20px;
  height: 24px;
}

.paste-row {
  display: flex;
  gap: 16px;
  align-items: center;
  height: 37px;
  padding-left: 39px;
}

.clip-ic {
  width: 22px;
  height: 24px;
}

.menu-sep {
  height: 3px;
  margin-left: 40px;
  border-top: 1px solid #dcdcdc;
}

.sep-4 {
  height: 4px;
}

.menu-arrow {
  position: absolute;
  right: 13px;
  top: 11px;
  width: 0;
  height: 0;
  border-left: 4px solid #666;
  border-top: 4px solid transparent;
  border-bottom: 4px solid transparent;
}

/* annotation arrow */
.arrow {
  position: absolute;
  left: 399px;
  top: 595px;
  width: 340px;
  height: 215px;
}

/* watermark */
.watermark {
  position: absolute;
  left: 1120px;
  top: 825px;
  width: 290px;
  height: 135px;
  pointer-events: none;
}

.watermark span {
  position: absolute;
  color: rgba(255, 255, 255, 0.6);
  -webkit-text-stroke: 1.5px #e4e4e4;
  white-space: nowrap;
}

.wm-paw {
  position: absolute;
  left: 104px;
  top: 4px;
  width: 84px;
  height: 90px;
}

.wm-bai {
  left: 12px;
  top: 30px;
  font-family: "Liberation Sans", sans-serif;
  font-size: 60px;
  font-weight: 700;
  line-height: 70px;
}

.wm-du {
  left: 119px;
  top: 50px;
  font-family: "Liberation Sans", sans-serif;
  font-size: 31px;
  line-height: 40px;
}

.wm-jy {
  left: 186px;
  top: 35px;
  font-family: "Noto Sans CJK SC", sans-serif;
  font-size: 43px;
  font-weight: 700;
  line-height: 60px;
}

.wm-url {
  left: 12px;
  top: 92px;
  font-family: "Liberation Sans", sans-serif;
  font-size: 32.500px;
  line-height: 44px;
}
```
